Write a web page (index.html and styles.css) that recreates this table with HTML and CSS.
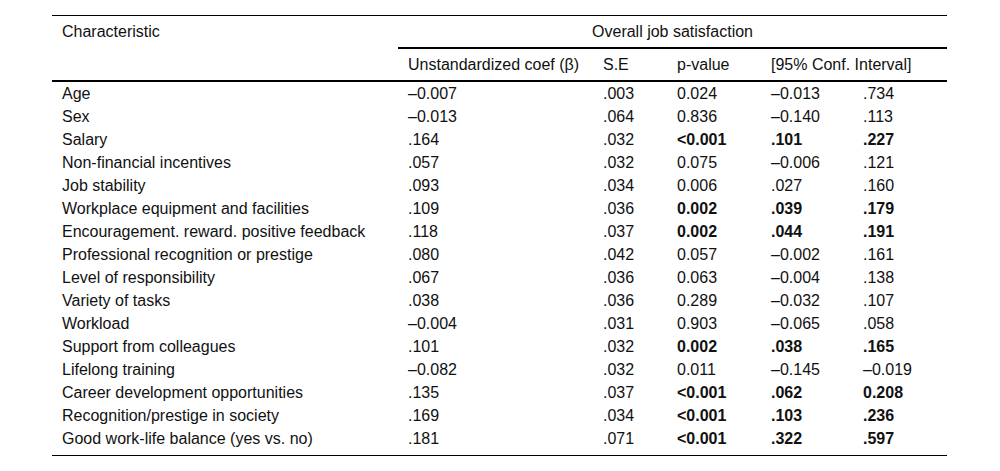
FILE: index.html
```html
<!DOCTYPE html>
<html lang="en">
<head>
<meta charset="utf-8">
<title>Overall job satisfaction</title>
<link rel="stylesheet" href="styles.css">
</head>
<body>
<table class="stats">
  <colgroup>
    <col class="c-name">
    <col class="c-coef">
    <col class="c-se">
    <col class="c-p">
    <col class="c-lo">
    <col class="c-hi">
  </colgroup>
  <thead>
    <tr class="h1">
      <th>Characteristic</th>
      <th colspan="5" class="group">Overall job satisfaction</th>
    </tr>
    <tr class="h2">
      <th></th>
      <th>Unstandardized coef (β)</th>
      <th>S.E</th>
      <th>p-value</th>
      <th colspan="2">[95% Conf. Interval]</th>
    </tr>
  </thead>
  <tbody>
    <tr><td>Age</td><td>–0.007</td><td>.003</td><td>0.024</td><td>–0.013</td><td>.734</td></tr>
    <tr><td>Sex</td><td>–0.013</td><td>.064</td><td>0.836</td><td>–0.140</td><td>.113</td></tr>
    <tr><td>Salary</td><td>.164</td><td>.032</td><td class="b">&lt;0.001</td><td class="b">.101</td><td class="b">.227</td></tr>
    <tr><td>Non-financial incentives</td><td>.057</td><td>.032</td><td>0.075</td><td>–0.006</td><td>.121</td></tr>
    <tr><td>Job stability</td><td>.093</td><td>.034</td><td>0.006</td><td>.027</td><td>.160</td></tr>
    <tr><td>Workplace equipment and facilities</td><td>.109</td><td>.036</td><td class="b">0.002</td><td class="b">.039</td><td class="b">.179</td></tr>
    <tr><td>Encouragement. reward. positive feedback</td><td>.118</td><td>.037</td><td class="b">0.002</td><td class="b">.044</td><td class="b">.191</td></tr>
    <tr><td>Professional recognition or prestige</td><td>.080</td><td>.042</td><td>0.057</td><td>–0.002</td><td>.161</td></tr>
    <tr><td>Level of responsibility</td><td>.067</td><td>.036</td><td>0.063</td><td>–0.004</td><td>.138</td></tr>
    <tr><td>Variety of tasks</td><td>.038</td><td>.036</td><td>0.289</td><td>–0.032</td><td>.107</td></tr>
    <tr><td>Workload</td><td>–0.004</td><td>.031</td><td>0.903</td><td>–0.065</td><td>.058</td></tr>
    <tr><td>Support from colleagues</td><td>.101</td><td>.032</td><td class="b">0.002</td><td class="b">.038</td><td class="b">.165</td></tr>
    <tr><td>Lifelong training</td><td>–0.082</td><td>.032</td><td>0.011</td><td>–0.145</td><td>–0.019</td></tr>
    <tr><td>Career development opportunities</td><td>.135</td><td>.037</td><td class="b">&lt;0.001</td><td class="b">.062</td><td class="b">0.208</td></tr>
    <tr><td>Recognition/prestige in society</td><td>.169</td><td>.034</td><td class="b">&lt;0.001</td><td class="b">.103</td><td class="b">.236</td></tr>
    <tr><td>Good work-life balance (yes vs. no)</td><td>.181</td><td>.071</td><td class="b">&lt;0.001</td><td class="b">.322</td><td class="b">.597</td></tr>
  </tbody>
</table>
</body>
</html>
```

FILE: styles.css
```css
html, body {
  margin: 0;
  padding: 0;
  background: #ffffff;
}

body {
  font-family: "Liberation Sans", Arial, sans-serif;
  font-size: 16px;
  color: #111111;
}

.stats {
  margin: 15px 0 0 52px;
  width: 895px;
  table-layout: fixed;
  border-collapse: separate;
  border-spacing: 0;
  border-top: 1px solid #000000;
  border-bottom: 1px solid #000000;
}

.c-name { width: 346px; }
.c-coef { width: 195px; }
.c-se   { width: 74px; }
.c-p    { width: 94px; }
.c-lo   { width: 92px; }
.c-hi   { width: 94px; }

.stats th,
.stats td {
  padding: 0 10px;
  text-align: left;
  font-weight: normal;
  white-space: nowrap;
  vertical-align: middle;
}

.stats .h1 th {
  height: 33px;
  padding-bottom: 2px;
  box-sizing: border-box;
}

.stats .h1 th.group {
  text-align: center;
  padding-bottom: 0;
  border-bottom: 2px solid #000000;
}

.stats .h2 th {
  height: 33px;
  box-sizing: border-box;
  border-bottom: 2px solid #000000;
}

.stats td {
  height: 23px;
  line-height: 23px;
}

.stats tbody tr:last-child td {
  padding-bottom: 5px;
}

.stats td.b {
  font-weight: bold;
}
```
